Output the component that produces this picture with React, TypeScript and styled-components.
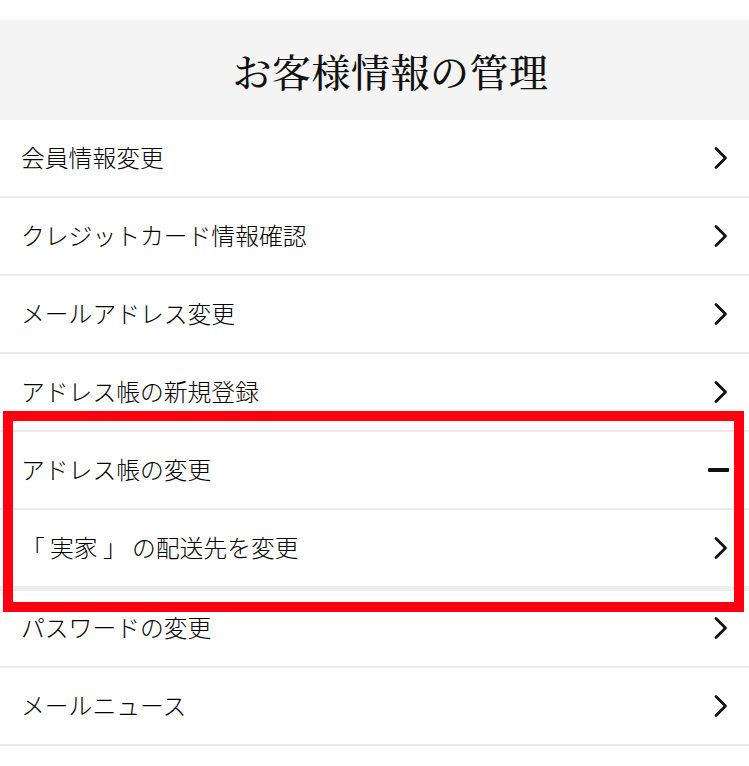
import styled, { createGlobalStyle } from "styled-components";

const GlobalStyle = createGlobalStyle`
  html, body {
    margin: 0;
    padding: 0;
    background: #fff;
  }
  body {
    font-family: "Noto Sans CJK JP", "Noto Sans", sans-serif;
    color: #111;
  }
`;

type Item = {
  label: string;
  icon: "chevron" | "minus";
  sub?: boolean;
};

const items: Item[] = [
  { label: "会員情報変更", icon: "chevron" },
  { label: "クレジットカード情報確認", icon: "chevron" },
  { label: "メールアドレス変更", icon: "chevron" },
  { label: "アドレス帳の新規登録", icon: "chevron" },
  { label: "アドレス帳の変更", icon: "minus" },
  { label: "「 実家 」 の配送先を変更", icon: "chevron", sub: true },
  { label: "パスワードの変更", icon: "chevron" },
  { label: "メールニュース", icon: "chevron" },
];

const Chevron = () => (
  <svg width="16" height="24" viewBox="0 0 16 24" fill="none">
    <path
      d="M3 2.5 L12.5 12 L3 21.5"
      stroke="#111"
      strokeWidth="2.8"
      strokeLinecap="round"
      strokeLinejoin="round"
    />
  </svg>
);

export default function App() {
  return (
    <>
      <GlobalStyle />
      <Page>
        <Header>
          <Title>お客様情報の管理</Title>
        </Header>
        <Menu>
          {items.map((item) => (
            <Row key={item.label} $sub={item.sub}>
              <Label>{item.label}</Label>
              {item.icon === "chevron" ? <Chevron /> : <Minus />}
            </Row>
          ))}
        </Menu>
        <Highlight />
      </Page>
    </>
  );
}

const Page = styled.div`
  position: relative;
  width: 749px;
  padding-top: 20px;
`;

const Header = styled.div`
  height: 100px;
  background: #f4f4f4;
  display: flex;
  align-items: center;
  justify-content: center;
`;

const Title = styled.h1`
  margin: 0 0 0 32px;
  font-family: "Noto Serif CJK JP", "Noto Sans CJK JP", serif;
  font-size: 39px;
  font-weight: 500;
  letter-spacing: 0.5px;
  color: #111;
`;

const Menu = styled.ul`
  list-style: none;
  margin: 0;
  padding: 0;
`;

const Row = styled.li<{ $sub?: boolean }>`
  height: 76px;
  display: flex;
  align-items: center;
  justify-content: space-between;
  padding: 0 20px 0 21px;
  border-bottom: ${(p) => (p.$sub ? "5px solid #eeeeee" : "2px solid #ebebeb")};
  box-sizing: content-box;
  margin-bottom: ${(p) => (p.$sub ? "-1px" : "0")};
`;

const Label = styled.span`
  font-size: 23.8px;
  font-weight: 300;
  color: #000;
  white-space: pre;
  margin-bottom: 4px;
`;

const Minus = styled.span`
  display: block;
  width: 21px;
  height: 4px;
  background: #111;
  border-radius: 1px;
`;

const Highlight = styled.div`
  position: absolute;
  left: 3px;
  top: 411px;
  width: 741px;
  height: 201px;
  box-sizing: border-box;
  border: 10px solid #ff0010;
  pointer-events: none;
`;
